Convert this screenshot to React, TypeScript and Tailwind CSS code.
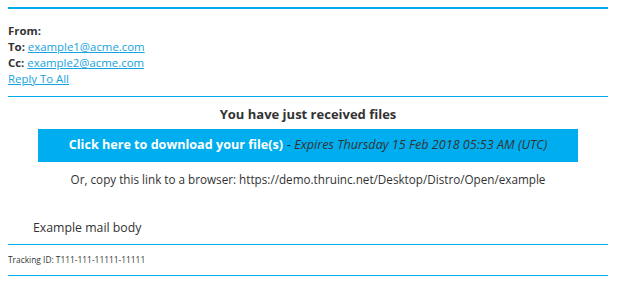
export default function App() {
  return (
    <div className="min-h-[283px] w-[618px] bg-white pl-2 pr-[10px] pt-[7px] text-[#333] [font-family:'Open_Sans',sans-serif]">
      <div className="border-t-2 border-[#00aeef]" />
      <div className="pt-[14px] pb-[9px] text-[11.4px] leading-[16px]">
        <div className="font-bold">From:</div>
        <div>
          <span className="font-bold">To: </span>
          <a href="#" className="text-[#16a3e0] underline">example1@acme.com</a>
        </div>
        <div>
          <span className="font-bold">Cc: </span>
          <a href="#" className="text-[#16a3e0] underline">example2@acme.com</a>
        </div>
        <a href="#" className="text-[#16a3e0] underline">Reply To All</a>
      </div>
      <div className="border-t border-[#00aeef]" />
      <div className="flex flex-col items-center pt-[8px]">
        <div className="text-[13px] font-bold leading-[18px]">You have just received files</div>
        <a
          href="#"
          className="mt-[6px] flex h-[33px] w-[540px] items-center justify-center bg-[#00aeef] text-[12.6px]"
        >
          <span className="font-bold text-white">Click here to download your file(s)</span>
          <span className="ml-1 italic text-[#333]">- Expires Thursday 15 Feb 2018 05:53 AM (UTC)</span>
        </a>
        <div className="mt-[9px] text-[11.7px] leading-[16px]">
          Or, copy this link to a browser: https://demo.thruinc.net/Desktop/Distro/Open/example
        </div>
      </div>
      <div className="pl-[25px] pt-[32px] pb-[7px] text-[12.3px] leading-[18px]">Example mail body</div>
      <div className="border-t border-[#00aeef]" />
      <div className="py-[9px] text-[8.4px] leading-[12px]">Tracking ID: T111-111-11111-11111</div>
      <div className="border-t border-[#00aeef]" />
    </div>
  );
}
